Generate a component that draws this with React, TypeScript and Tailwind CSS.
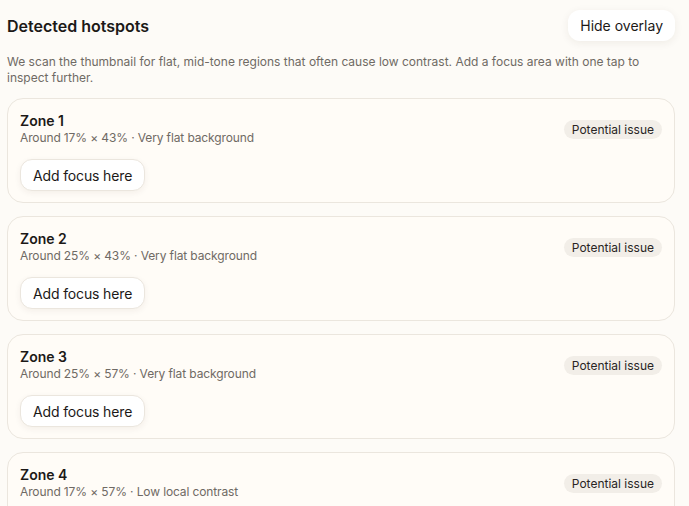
import React from "react";

type Zone = {
  name: string;
  size: string;
  reason: string;
};

const ZONES: Zone[] = [
  { name: "Zone 1", size: "Around 17% × 43%", reason: "Very flat background" },
  { name: "Zone 2", size: "Around 25% × 43%", reason: "Very flat background" },
  { name: "Zone 3", size: "Around 25% × 57%", reason: "Very flat background" },
  { name: "Zone 4", size: "Around 17% × 57%", reason: "Low local contrast" },
];

const ZoneCard = ({ zone }: { zone: Zone }) => (
  <div className="rounded-2xl border border-[#ebe6de] bg-[#fffcf7] px-[12px] pt-[13px] pb-[11px]">
    <div className="flex items-start justify-between">
      <div>
        <div className="text-[14px] leading-[18px] font-semibold text-[#1c1917]">{zone.name}</div>
        <div className="text-[12px] leading-[16px] tracking-[-0.01em] text-[#6f6a64]">
          {zone.size} · {zone.reason}
        </div>
      </div>
      <span className="mt-[8px] rounded-full bg-[#f2eee8] px-[8px] py-[2px] text-[12px] leading-[15px] text-[#292524]">
        Potential issue
      </span>
    </div>
    <button className="mt-[13px] h-[32px] rounded-xl border border-[#ebe6de] bg-white px-[12px] text-[14px] tracking-[-0.01em] text-[#1c1917] shadow-[0_2px_6px_rgba(60,40,20,0.06)]">
      Add focus here
    </button>
  </div>
);

const App = () => {
  return (
    <div
      className="min-h-screen bg-[#fdfbf7] pl-[7px] pr-[14px] pt-[10px]"
      style={{ fontFamily: "Inter, 'Noto Sans', sans-serif" }}
    >
      <div className="flex items-center justify-between">
        <h2 className="text-[16px] font-semibold text-[#1c1917]">Detected hotspots</h2>
        <button className="h-[31px] rounded-xl bg-white px-[12px] text-[14px] text-[#1c1917] shadow-[0_2px_8px_rgba(60,40,20,0.07)]">
          Hide overlay
        </button>
      </div>
      <p className="mt-[13px] text-[12px] leading-[16px] text-[#6f6a64]">
        We scan the thumbnail for flat, mid-tone regions that often cause low contrast. Add a focus area with one tap to
        inspect further.
      </p>
      <div className="mt-[12px] flex flex-col gap-[13px]">
        {ZONES.map((zone) => (
          <ZoneCard key={zone.name} zone={zone} />
        ))}
      </div>
    </div>
  );
};

export default App;
